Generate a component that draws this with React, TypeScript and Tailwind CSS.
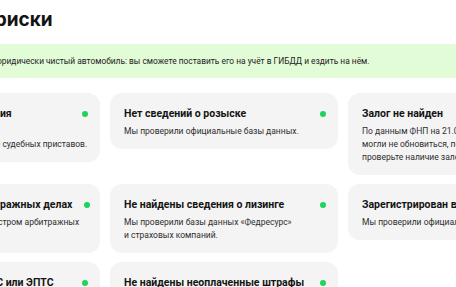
import React from "react";

type Check = {
  title: string;
  lines: string[];
  ok?: boolean;
};

const checks: (Check | null)[] = [
  {
    title: "Не найдены ограничения",
    lines: ["Мы проверили данные по", "базам Федеральной службы судебных приставов."],
    ok: true,
  },
  {
    title: "Нет сведений о розыске",
    lines: ["Мы проверили официальные базы данных."],
    ok: true,
  },
  {
    title: "Залог не найден",
    lines: [
      "По данным ФНП на 21.03.2024 залог не найден. Данные",
      "могли не обновиться, поэтому перед покупкой",
      "проверьте наличие залога у продавца.",
    ],
    ok: true,
  },
  {
    title: "Нет сведений об арбитражных делах",
    lines: ["Мы сверили сведения с реестром арбитражных", "дел."],
    ok: true,
  },
  {
    title: "Не найдены сведения о лизинге",
    lines: ["Мы проверили базы данных «Федресурс»", "и страховых компаний."],
    ok: true,
  },
  {
    title: "Зарегистрирован в ГИБДД",
    lines: ["Мы проверили официальные данные ГИБДД."],
    ok: true,
  },
  {
    title: "Нет дубликатов по ПТС или ЭПТС",
    lines: ["Мы проверили историю документов."],
    ok: true,
  },
  {
    title: "Не найдены неоплаченные штрафы",
    lines: ["Мы проверили базы ГИС ГМП."],
    ok: true,
  },
  null,
];

const CheckCard = ({ item }: { item: Check }) => (
  <div className="rounded-[12px] bg-[#f4f4f4] pl-[14px] pr-[12px] pt-[14px] pb-[11px] overflow-hidden">
    <div className="flex items-center justify-between gap-3">
      <div className="text-[10.5px] leading-[14px] font-bold text-[#141414] whitespace-nowrap">
        {item.title}
      </div>
      {item.ok && (
        <span className="w-[6px] h-[6px] rounded-full bg-[#1fd45c] shrink-0" />
      )}
    </div>
    <div className="mt-[4px] text-[8.5px] leading-[13px] text-[#2e2e2e] whitespace-nowrap">
      {item.lines.map((line, i) => (
        <div key={i}>{line}</div>
      ))}
    </div>
  </div>
);

export default function App() {
  return (
    <div className="w-[456px] h-[287px] overflow-hidden bg-white font-['Roboto',sans-serif] text-[#141414]">
      <div className="-ml-[128px] w-[704px]">
        <h2 className="-ml-[18px] pt-[8px] font-['Inter',sans-serif] text-[19px] leading-[24px] font-bold whitespace-nowrap">
          Юридические риски
        </h2>
        <div className="mt-[12px] h-[34px] flex items-center bg-[#e2fcd8] pl-[34px] text-[8.4px] text-[#222] whitespace-nowrap">
          Хорошие новости: это юридически чистый автомобиль: вы сможете поставить его на учёт в ГИБДД и ездить на нём.
        </div>
        <div className="mt-[15px] grid grid-cols-[228px_228px_228px] gap-x-[10px] gap-y-[9px] items-start">
          {checks.map((item, i) =>
            item ? <CheckCard key={i} item={item} /> : <div key={i} />
          )}
        </div>
      </div>
    </div>
  );
}
